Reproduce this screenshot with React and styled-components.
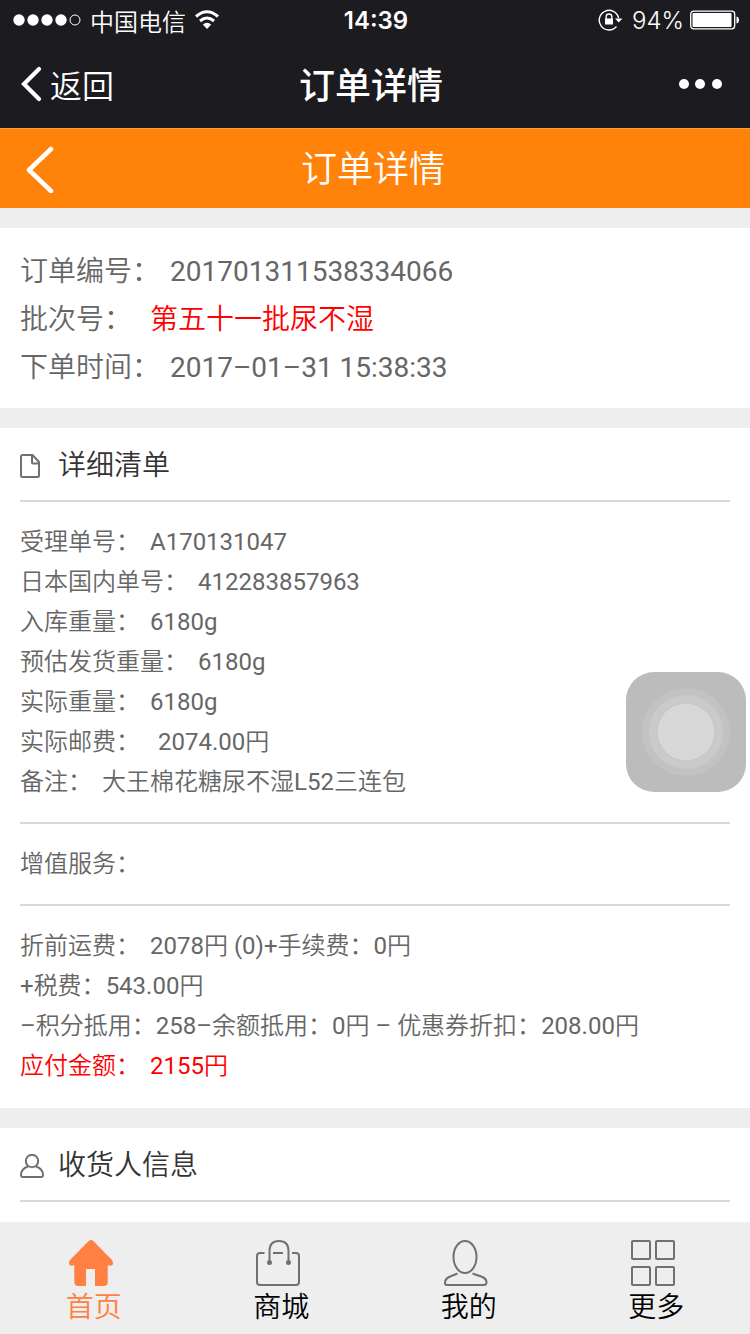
import React from "react";
import styled, { createGlobalStyle } from "styled-components";

const orderInfo = [
  { label: "订单编号：", value: "201701311538334066" },
  { label: "批次号：", value: "第五十一批尿不湿", wide: true, red: true },
  { label: "下单时间：", value: "2017–01–31 15:38:33" },
];

const detailRows = [
  { label: "受理单号：", value: "A170131047" },
  { label: "日本国内单号：", value: "412283857963" },
  { label: "入库重量：", value: "6180g" },
  { label: "预估发货重量：", value: "6180g" },
  { label: "实际重量：", value: "6180g" },
  { label: "实际邮费：", value: "2074.00円", wide: true },
  { label: "备注：", value: "大王棉花糖尿不湿L52三连包" },
];

const feeRows = [
  { label: "折前运费：", value: "2078円 (0)+手续费：0円" },
  { label: "+税费：543.00円" },
  { label: "–积分抵用：258–余额抵用：0円 – 优惠券折扣：208.00円" },
  { label: "应付金额：", value: "2155円", redRow: true },
];

const HomeIcon = () => (
  <TabIcon viewBox="0 0 50 46">
    <path
      fill="#ff8040"
      stroke="none"
      d="M19.5 1.2Q22 -1 24.5 1.2L43 20Q44 21 44 23Q44 25.6 41.5 25.6H38.7V42Q38.7 46 34.7 46H26V29H17V46H9.3Q5.3 46 5.3 42V25.6H2.5Q0 25.6 0 23Q0 21 1 20Z"
    />
  </TabIcon>
);

const BagIcon = () => (
  <TabIcon viewBox="0 0 50 46">
    <path d="M8.500 13H4Q1 13 1 16V42Q1 45 4 45H40Q43 45 43 42V16Q43 13 40 13H36M17 13H27M13.500 22V11Q13.500 1 23 1Q32.500 1 32.500 11V22" />
    <circle cx="13.500" cy="22.500" r="1.500" fill="#707070" />
    <circle cx="32.500" cy="22.500" r="1.500" fill="#707070" />
  </TabIcon>
);

const MineIcon = () => (
  <TabIcon viewBox="0 0 50 46">
    <ellipse cx="21" cy="17" rx="11.500" ry="16" />
    <path d="M13.500 33.500L5 37Q1 39 1 43Q1 45 3 45H40Q42.500 45 42.500 42Q42.500 39 38.500 37L28.500 33.500" />
  </TabIcon>
);

const MoreIcon = () => (
  <TabIcon viewBox="0 0 50 46">
    <rect x="1" y="1" width="18" height="18" rx="1" />
    <rect x="25" y="1" width="18" height="18" rx="1" />
    <rect x="1" y="27" width="18" height="18" rx="1" />
    <rect x="25" y="27" width="18" height="18" rx="1" />
  </TabIcon>
);

const tabs = [
  { name: "首页", icon: <HomeIcon />, active: true },
  { name: "商城", icon: <BagIcon /> },
  { name: "我的", icon: <MineIcon /> },
  { name: "更多", icon: <MoreIcon /> },
];

// latin runs get a heavier weight so they sit evenly next to the Chinese text
const mixed = (text) =>
  text
    .split(/([\x20-\x7e–]+)/)
    .map((part, i) => (i % 2 ? <Latin key={i}>{part}</Latin> : part));

const Row = ({ label, value, wide, red, redRow }) => (
  <RowLine $wide={wide} $red={redRow}>
    <span>{mixed(label)}</span>
    {value && <Value $red={red}>{mixed(value)}</Value>}
  </RowLine>
);

const StatusBar = () => (
  <Status>
    <StatusSide>
      <svg width="70" height="14" viewBox="0 0 70 14" fill="#fff">
        <circle cx="7" cy="7" r="5.700" />
        <circle cx="21" cy="7" r="5.700" />
        <circle cx="35" cy="7" r="5.700" />
        <circle cx="49" cy="7" r="5.700" />
        <circle cx="63" cy="7" r="5" fill="none" stroke="#fff" />
      </svg>
      <span>中国电信</span>
      <WifiIcon width="26" height="20" viewBox="0 0 26 20">
        <path d="M2 6.500Q13 -3 24 6.500M6 11Q13 5 20 11" />
        <path d="M8.800 14.500Q13 10.800 17.200 14.500L13 19Z" fill="#fff" stroke="none" />
      </WifiIcon>
    </StatusSide>
    <Time>14:39</Time>
    <StatusSide $end>
      <svg width="28" height="22" viewBox="0 0 28 22" fill="none" stroke="#fff" strokeWidth="1.400">
        <path d="M20.600 9A9.800 9.800 0 1 0 18.500 17.500" />
        <path d="M8.200 10V7.500Q8.200 5 11 5Q13.800 5 13.800 7.500V10" />
        <rect x="7" y="9.500" width="8" height="6" fill="#fff" stroke="none" />
        <path d="M17 9.500H24.500L20.700 13.500Z" fill="#fff" stroke="none" />
      </svg>
      <Percent>94%</Percent>
      <svg width="50" height="20" viewBox="0 0 50 20">
        <rect x="0.700" y="1.200" width="44" height="17.600" rx="3" fill="none" stroke="#fff" strokeWidth="1.300" />
        <rect x="2.500" y="3" width="39" height="14" rx="1" fill="#fff" />
        <path d="M46.500 6.500Q49 7 49 10Q49 13 46.500 13.500Z" fill="#fff" />
      </svg>
    </StatusSide>
  </Status>
);

const App = () => {
  return (
    <Page>
      <GlobalStyle />
      <TopBar>
        <StatusBar />
        <WebNav>
          <BackButton type="button">
            <svg width="24" height="36" viewBox="0 0 24 36">
              <path d="M19 3L4 18L19 33" fill="none" stroke="#fff" strokeWidth="4.200" strokeLinecap="round" />
            </svg>
            返回
          </BackButton>
          <WebTitle>订单详情</WebTitle>
          <DotsButton type="button" aria-label="更多选项">
            <svg width="44" height="12" viewBox="0 0 44 12" fill="#fff">
              <circle cx="6" cy="6" r="5" />
              <circle cx="22" cy="6" r="5" />
              <circle cx="39" cy="6" r="5" />
            </svg>
          </DotsButton>
        </WebNav>
      </TopBar>

      <OrderHeader>
        <IconLink href="#back" aria-label="返回">
          <svg width="28" height="48" viewBox="0 0 28 48">
            <path d="M25 4L3 25L25 46" fill="none" stroke="#fff" strokeWidth="4.500" strokeLinejoin="round" strokeLinecap="round" />
          </svg>
        </IconLink>
        <OrderTitle>订单详情</OrderTitle>
      </OrderHeader>

      <Content>
        <Summary>
          {orderInfo.map((row) => (
            <Row key={row.label} {...row} />
          ))}
        </Summary>

        <Card>
          <CardTitle>
            <TitleIcon viewBox="0 0 24 24">
              <path d="M3 1H12.500L19 8V21.500Q19 23 17.500 23H2.500Q1 23 1 21.500V2.500Q1 1 3 1ZM12 1.500V8.500Q12 9.500 13 9.500H19" />
            </TitleIcon>
            详细清单
          </CardTitle>
          <Group>
            {detailRows.map((row) => (
              <Row key={row.label} {...row} />
            ))}
          </Group>
          <Group>
            <Row label="增值服务：" />
          </Group>
          <Group>
            {feeRows.map((row) => (
              <Row key={row.label} {...row} />
            ))}
          </Group>
        </Card>

        <Card>
          <CardTitle>
            <TitleIcon viewBox="0 0 24 24">
              <circle cx="12" cy="7" r="6.200" />
              <path d="M8 12.500Q1 15 1 21Q1 23 3 23H21Q23 23 23 21Q23 15 16 12.500" />
            </TitleIcon>
            收货人信息
          </CardTitle>
          <Group />
        </Card>
      </Content>

      <TabBar>
        {tabs.map((tab) => (
          <Tab key={tab.name} href={"#" + tab.name} $active={tab.active}>
            {tab.icon}
            {tab.name}
          </Tab>
        ))}
      </TabBar>

      <AssistiveTouch type="button" aria-label="辅助触控">
        <svg width="92" height="92" viewBox="0 0 92 92">
          <circle cx="46" cy="46" r="44" fill="#c2c2c2" />
          <circle cx="46" cy="46" r="37" fill="#cacaca" />
          <circle cx="46" cy="46" r="29" fill="#d7d7d7" stroke="#c4c4c4" />
        </svg>
      </AssistiveTouch>
    </Page>
  );
};

const GlobalStyle = createGlobalStyle`
  * {
    box-sizing: border-box;
  }
  body {
    margin: 0;
    background: #eee;
    font-family: Roboto, "Noto Sans CJK SC", sans-serif;
    font-weight: 350;
  }
  button {
    border: 0;
    padding: 0;
    background: none;
    color: inherit;
    font: inherit;
    cursor: pointer;
  }
  a {
    color: inherit;
    text-decoration: none;
  }
  svg {
    display: block;
    flex: none;
  }
`;

const Page = styled.div`
  min-height: 100vh;
`;

const TopBar = styled.div`
  background: #1c1b20;
  color: #fff;
`;

const Status = styled.div`
  display: grid;
  grid-template-columns: 1fr auto 1fr;
  align-items: center;
  height: 40px;
  padding: 0 10px 0 12px;
  font-size: 24px;
`;

const StatusSide = styled.div`
  display: flex;
  align-items: center;
  gap: ${(props) => (props.$end ? "6px" : "8px")};
  justify-content: ${(props) => (props.$end ? "flex-end" : "flex-start")};
`;

const WifiIcon = styled.svg`
  fill: none;
  stroke: #fff;
  stroke-width: 3;
`;

const Time = styled.span`
  font-family: Inter, sans-serif;
  font-weight: 600;
`;

const Percent = styled.span`
  font-family: Inter, sans-serif;
  font-weight: 300;
`;

const WebNav = styled.div`
  display: grid;
  grid-template-columns: 1fr auto 1fr;
  align-items: center;
  height: 88px;
  padding: 0 28px 0 20px;
`;

const BackButton = styled.button`
  display: flex;
  align-items: center;
  gap: 6px;
  font-size: 32px;
`;

const WebTitle = styled.div`
  padding-bottom: 2px;
  font-size: 36px;
  font-weight: 500;
`;

const DotsButton = styled.button`
  justify-self: end;
`;

const OrderHeader = styled.header`
  display: grid;
  grid-template-columns: 1fr auto 1fr;
  align-items: center;
  height: 80px;
  padding: 0 30px 0 26px;
  background: #ff830a;
  border-top: 1px solid #ff9a38;
  color: #fff;
`;

const IconLink = styled.a`
  justify-self: start;
`;

const OrderTitle = styled.h1`
  margin: 0;
  padding-bottom: 6px;
  font-size: 36px;
  font-weight: 350;
`;

const Content = styled.main`
  display: flex;
  flex-direction: column;
  gap: 20px;
  padding-top: 20px;
  color: #666;
`;

const Summary = styled.section`
  padding: 20px 20px 16px;
  background: #fff;
  font-size: 28px;
  line-height: 48px;
`;

const Card = styled.section`
  padding: 0 20px 2px;
  background: #fff;
  font-size: 24px;
  line-height: 40px;
`;

const CardTitle = styled.h2`
  display: flex;
  align-items: center;
  gap: 14px;
  height: 72px;
  margin: 0;
  padding-top: 4px;
  color: #333;
  font-size: 28px;
  font-weight: 350;
`;

const TitleIcon = styled.svg`
  width: 24px;
  height: 24px;
  fill: none;
  stroke: #707070;
  stroke-width: 2;
`;

const Group = styled.div`
  padding: 20px 0;
  border-top: 2px solid #d9d9d9;
`;

const RowLine = styled.div`
  display: flex;
  gap: ${(props) => (props.$wide ? "18px" : "10px")};
  color: ${(props) => (props.$red ? "#f00" : "inherit")};
`;

const Value = styled.span`
  color: ${(props) => (props.$red ? "#f00" : "inherit")};
`;

const Latin = styled.span`
  font-weight: 400;
`;

const TabBar = styled.nav`
  position: fixed;
  right: 0;
  bottom: 0;
  left: 0;
  display: grid;
  grid-template-columns: repeat(4, 1fr);
  height: 112px;
  background: #eee;
`;

const Tab = styled.a`
  display: flex;
  flex-direction: column;
  align-items: center;
  padding-top: 18px;
  color: ${(props) => (props.$active ? "#ff8040" : "#000")};
  font-size: 28px;
  line-height: 44px;
`;

const TabIcon = styled.svg`
  width: 50px;
  height: 46px;
  fill: none;
  stroke: #707070;
  stroke-width: 2;
`;

const AssistiveTouch = styled.button`
  position: fixed;
  top: 672px;
  right: 4px;
  display: flex;
  align-items: center;
  justify-content: center;
  width: 120px;
  height: 120px;
  && {
    border-radius: 28px;
    background: #bcbcbc;
  }
`;

export default App;
